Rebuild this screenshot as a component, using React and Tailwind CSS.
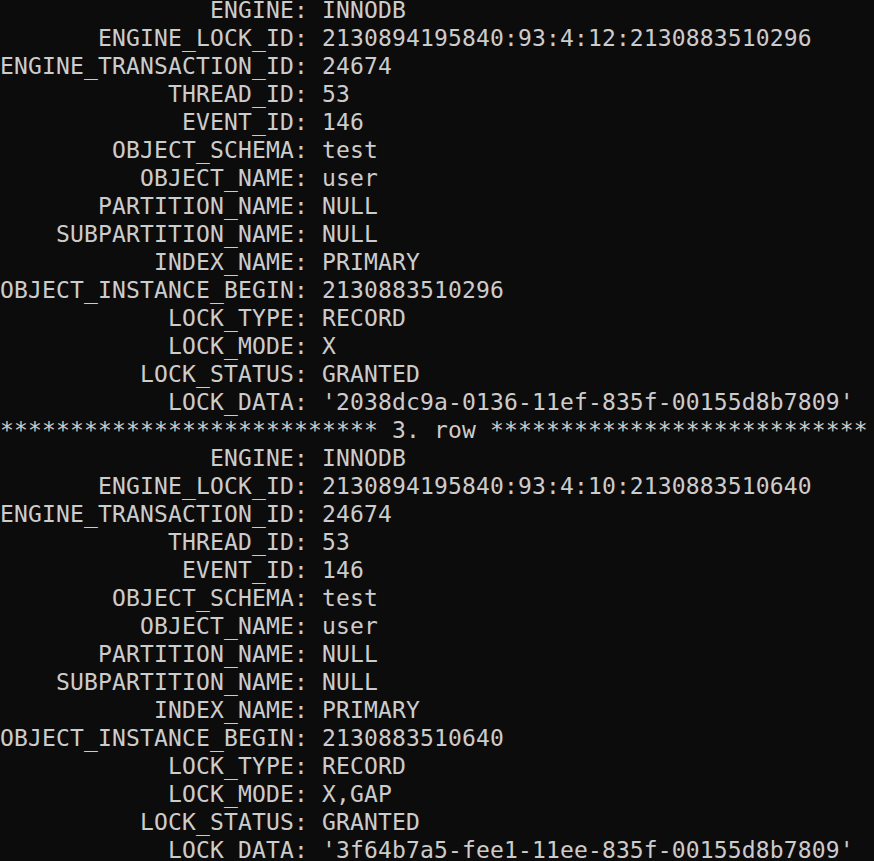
const rows = [
  {
    ENGINE: "INNODB",
    ENGINE_LOCK_ID: "2130894195840:93:4:12:2130883510296",
    ENGINE_TRANSACTION_ID: "24674",
    THREAD_ID: "53",
    EVENT_ID: "146",
    OBJECT_SCHEMA: "test",
    OBJECT_NAME: "user",
    PARTITION_NAME: "NULL",
    SUBPARTITION_NAME: "NULL",
    INDEX_NAME: "PRIMARY",
    OBJECT_INSTANCE_BEGIN: "2130883510296",
    LOCK_TYPE: "RECORD",
    LOCK_MODE: "X",
    LOCK_STATUS: "GRANTED",
    LOCK_DATA: "'2038dc9a-0136-11ef-835f-00155d8b7809'",
  },
  {
    ENGINE: "INNODB",
    ENGINE_LOCK_ID: "2130894195840:93:4:10:2130883510640",
    ENGINE_TRANSACTION_ID: "24674",
    THREAD_ID: "53",
    EVENT_ID: "146",
    OBJECT_SCHEMA: "test",
    OBJECT_NAME: "user",
    PARTITION_NAME: "NULL",
    SUBPARTITION_NAME: "NULL",
    INDEX_NAME: "PRIMARY",
    OBJECT_INSTANCE_BEGIN: "2130883510640",
    LOCK_TYPE: "RECORD",
    LOCK_MODE: "X,GAP",
    LOCK_STATUS: "GRANTED",
    LOCK_DATA: "'3f64b7a5-fee1-11ee-835f-00155d8b7809'",
  },
];

function fieldLines(row) {
  return Object.entries(row).map(([k, v]) => k.padStart(21, " ") + ": " + v);
}

const lines = [
  ...fieldLines(rows[0]),
  "*************************** 3. row ***************************",
  ...fieldLines(rows[1]),
];

export default function App() {
  return (
    <div className="w-[874px] h-[861px] overflow-hidden bg-[#0c0c0c]">
      <div
        className="-mt-1 text-[#cccccc] text-[23px] tracking-[0.15px] leading-[28px] whitespace-pre"
        style={{ fontFamily: '"DejaVu Sans Mono", "Liberation Mono", monospace' }}
      >
        {lines.map((l, i) => (
          <div key={i} className="h-[28px]">{l}</div>
        ))}
      </div>
    </div>
  );
}
